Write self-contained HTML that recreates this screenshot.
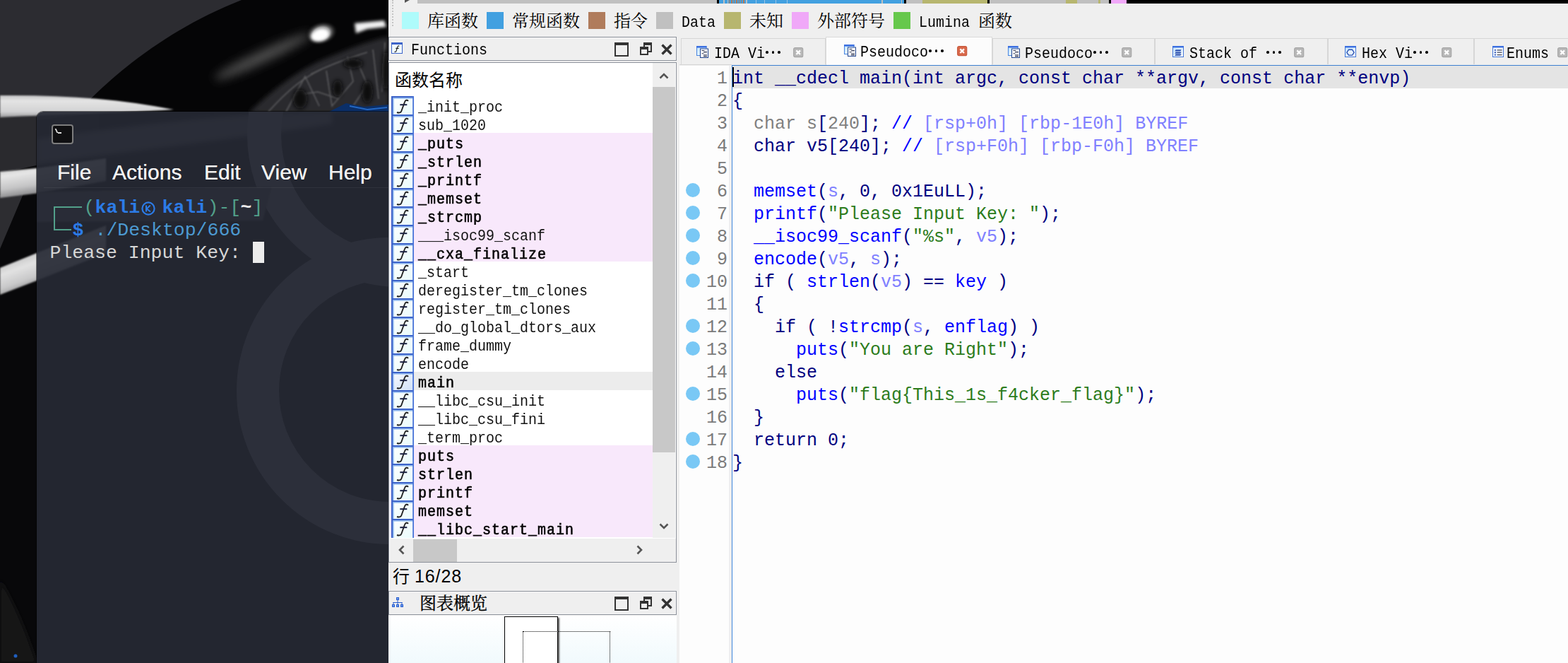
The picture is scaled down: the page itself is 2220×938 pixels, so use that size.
<!DOCTYPE html><html><head><meta charset="utf-8"><title>IDA</title><style>
html,body{margin:0;padding:0}
body{width:2220px;height:938px;overflow:hidden;position:relative;background:#efefef;font-family:"Liberation Sans",sans-serif}
#wall{position:absolute;left:0;top:0}
.cj{position:absolute;overflow:visible}
#term{position:absolute;left:52px;top:158px;width:498px;height:780px;background:rgba(38,41,52,.92);border-top-left-radius:9px;box-shadow:0 0 0 1px rgba(0,0,0,.5);overflow:hidden}
#ticon{position:absolute;left:21px;top:18px;width:27px;height:24px;border:2px solid #7d7d7d;border-radius:4px;background:#101012}
#ticon i{position:absolute;left:4px;top:4px;width:2px;height:6px;background:#ddd;transform:skewX(25deg)}
#ticon b{position:absolute;left:7px;top:9px;width:5px;height:2px;background:#ddd}
#menu span{position:absolute;top:69px;font-size:30px;line-height:34px;color:#f2f2f2;letter-spacing:0;text-shadow:0 0 .6px #fff}
#msep{position:absolute;left:10px;right:0;top:107px;height:1px;background:rgba(255,255,255,.06)}
.bx{position:absolute;background:#52a08a}
.tl{position:absolute;left:-1.5px;height:32px;width:498px;font-family:"Liberation Mono",monospace;font-size:26.5px;line-height:32px;white-space:pre}
.tl span{position:absolute;top:0}
#cur{position:absolute;left:306px;top:184px;width:16px;height:30px;background:#ececec}
#ida{position:absolute;left:550px;top:0;width:1670px;height:938px;background:#efefef;overflow:hidden}
.nv{position:absolute;top:0;height:5px}
.sq{position:absolute;top:17px;width:24px;height:24px}
.ss{position:absolute;font-family:"Liberation Mono",monospace;font-size:20px;line-height:30px;color:#000;white-space:pre;transform:scaleY(1.12);transform-origin:0 70%}
.st{position:absolute;font-size:25px;line-height:32px;color:#000;letter-spacing:.9px}
.ptitle{position:absolute;border:1px solid #8d929b;box-sizing:content-box;box-shadow:inset 0 0 0 1px #f6f6f6}
.ficon{position:absolute;box-sizing:border-box;background:#e9fbfb;border:solid #3c63c9}
.ficon em{position:absolute;font-family:"Liberation Serif",serif;font-style:italic;color:#222;line-height:1}
.bmax{position:absolute;width:16px;height:14px;border:2px solid #333;border-top-width:4px}
.brs1{position:absolute;width:8px;height:8px;border:2px solid #333;border-top-width:4px}
.brs2{position:absolute;width:8px;height:6px;border:2px solid #333;border-top-width:4px;background:#efefef}
#flist{position:absolute;left:0;top:88px;width:406px;height:706px;border:1px solid #8d929b;background:#fff;overflow:hidden}
.r{position:absolute;left:1px;width:372px;height:26px}
.pk{background:#f8e8fb}
.sel{background:#ececec}
.fi{position:absolute;left:2px;top:0;color:#e9fbfb}
.sel .fi{color:#cfe0f8}
.fn{position:absolute;left:40px;top:2px;font-family:"Liberation Mono",monospace;font-size:20px;line-height:30px;white-space:pre;color:#111;transform:scaleY(1.12);transform-origin:0 70%}
.bd{color:#000;-webkit-text-stroke:.55px #000;letter-spacing:1px}
.vsb{position:absolute;left:373px;top:0;width:32px;height:672px;background:#efefef}
.vth{position:absolute;left:0;top:34px;width:32px;height:517px;background:#c8c8c8}
.hsb{position:absolute;left:1px;top:673px;width:405px;height:33px;background:#efefef}
.hth{position:absolute;left:33px;top:1px;width:62px;height:32px;background:#c8c8c8}
#gov{position:absolute;left:0;top:871px;width:408px;height:67px;background:linear-gradient(#fff,#f1fafd)}
.gr1{position:absolute;left:164px;top:1px;width:74px;height:80px;border:1px solid #000;background:#fff;box-shadow:2px 2px 2px #555}
.gr2{position:absolute;left:190px;top:22px;width:122px;height:60px;border:1px dotted #000}
#tabs{position:absolute;left:0;top:0;width:1670px;height:93px}
.tab{position:absolute;top:54px;height:37px;border:1px solid #d6d6d6;border-bottom:none;background:#efefef;box-sizing:border-box}
.act{top:52px;height:40px;background:#fcfcfc;border-color:#dadada}
.tabline{position:absolute;left:486px;top:92px;width:1190px;height:1px;background:#3d7fd0}
.ti{position:absolute}
.dt{position:absolute;width:3.6px;height:3.6px;background:#000;border-radius:50%}
#code{position:absolute;left:412px;top:93px;width:1258px;height:845px;background:#fdfdfd}
#hl{position:absolute;left:75px;top:0;width:1183px;height:32px;background:#e4e4e4}
#vline{position:absolute;left:70px;top:0;width:4px;height:845px;background:#efefef;border-right:1px solid #3f86dc}
#caret{position:absolute;left:75px;top:2px;width:2px;height:28px;background:#000}
.dot{position:absolute;left:9px;width:20px;height:20px;border-radius:50%;background:#79c8f5}
.ln{position:absolute;left:30px;margin-top:3px;width:38px;text-align:right;font-family:"Liberation Mono",monospace;font-size:25px;line-height:32px;color:#7b7b7b}
.cl{position:absolute;left:75px;margin:3px 0 0 0;font-family:"Liberation Mono",monospace;font-size:25px;line-height:32px;white-space:pre;color:#000080}
.k{color:#000080}.g{color:#808080}.f{color:#0000ff}.v{color:#8080ff}.s{color:#2c7c1c}.c{color:#0000ff}.m{color:#8080ff}
</style></head><body><svg width="0" height="0" style="position:absolute"><defs><linearGradient id="dg" x1="0" y1="0" x2="1" y2="1"><stop offset="0" stop-color="#bfe4ff"/><stop offset="1" stop-color="#fff"/></linearGradient><linearGradient id="fbg" x1="0" y1="0" x2="1" y2="1"><stop offset="0" stop-color="#fff" stop-opacity=".9"/><stop offset="1" stop-color="#fff" stop-opacity="0"/></linearGradient><g id="fic"><rect width="32" height="27" fill="currentColor"/><rect width="32" height="27" fill="url(#fbg)"/><rect width="2.4" height="27" fill="#3c63c9"/><rect width="32" height="2.4" fill="#3c63c9"/><rect x="2.4" y="2.4" width="1.2" height="24.6" fill="#7fb0ee"/><rect x="2.4" y="2.4" width="29.6" height="1.2" fill="#7fb0ee"/><rect x="30.2" width="1.8" height="27" fill="#4a74d8"/><path d="M24,6.8C22.6,5.2 20,5.2 19,8.2L14.2,21.5C13.4,23.6 10.6,24 8,23" fill="none" stroke="#222" stroke-width="1.9"/><path d="M12.3,12.2H22.3" stroke="#1a2040" stroke-width="2"/></g></defs></svg><svg id="wall" width="550" height="938" viewBox="0 0 550 938">
<defs>
<linearGradient id="sv" x1="0" y1="0" x2="0" y2="1"><stop offset="0" stop-color="#c4c4c5"/><stop offset=".25" stop-color="#e4e4e4"/><stop offset=".75" stop-color="#d2d2d3"/><stop offset="1" stop-color="#9a9a9c"/></linearGradient><linearGradient id="sv2" gradientUnits="userSpaceOnUse" x1="0" y1="240" x2="6" y2="280"><stop offset="0" stop-color="#d0d0d0"/><stop offset=".25" stop-color="#e6e6e6"/><stop offset=".7" stop-color="#c4c4c5"/><stop offset="1" stop-color="#8e8e90"/></linearGradient><linearGradient id="sv3" gradientUnits="userSpaceOnUse" x1="0" y1="379" x2="14" y2="417"><stop offset="0" stop-color="#d0d0d0"/><stop offset=".25" stop-color="#e2e2e2"/><stop offset=".7" stop-color="#c8c8c9"/><stop offset="1" stop-color="#98989a"/></linearGradient>
<radialGradient id="hl"><stop offset="0" stop-color="#fff"/><stop offset=".5" stop-color="#bbb" stop-opacity=".8"/><stop offset="1" stop-color="#000" stop-opacity="0"/></radialGradient>
<filter id="b1"><feGaussianBlur stdDeviation="1.2"/></filter><filter id="b2" x="-30%" y="-50%" width="160%" height="200%"><feGaussianBlur stdDeviation="2.2"/></filter>
<filter id="b3" x="-30%" y="-30%" width="160%" height="160%"><feGaussianBlur stdDeviation="3"/></filter>
<filter id="b8" x="-50%" y="-400%" width="200%" height="900%"><feGaussianBlur stdDeviation="7"/></filter>
</defs>
<rect width="550" height="938" fill="#2c2c31"/>
<path d="M128,140 C165,104 235,42 342,0 L550,0 L550,160 L128,160 Z" fill="#050506"/>
<rect x="0" y="160" width="550" height="778" fill="#08080a"/>
<path d="M0,165 L140,160 L140,215 L0,245 Z" fill="#2a2a2e"/>
<path d="M52,170 L140,160 L140,215 L52,235 Z" fill="#111113"/>
<path d="M0,276 L34,272 L0,352 Z" fill="#2d2d31"/>
<ellipse cx="372" cy="80" rx="75" ry="9" fill="#4c4c4c" transform="rotate(-25 372 80)" filter="url(#b8)"/>
<ellipse cx="455" cy="47" rx="24" ry="17" fill="url(#hl)" transform="rotate(-15 455 47)"/>
<ellipse cx="453" cy="50" rx="13" ry="8" fill="#fff" transform="rotate(-15 453 50)" filter="url(#b2)"/>
<path d="M502,33 L544,29 L547,38 L520,41 L504,47 Z" fill="#f2f2f2" filter="url(#b2)"/>
<path d="M352,160 C395,118 435,92 468,80 C500,66 530,56 550,52 L550,160 Z" fill="#2c2c2e" filter="url(#b3)"/>
<g fill="none" stroke="#5c5c5e" stroke-width="1.6" filter="url(#b1)"><path d="M380,158 C410,125 430,110 455,98"/><path d="M405,158 L432,108 L452,150"/><path d="M440,105 C470,90 500,80 520,74"/><path d="M462,100 L470,150 L500,115 L492,80"/><path d="M505,85 L520,120 L500,150"/><path d="M528,70 L536,140 M545,60 L541,130"/><path d="M415,135 L450,130 L480,140"/></g>
<g fill="#0a0a0b" filter="url(#b3)"><ellipse cx="425" cy="140" rx="10" ry="14"/><ellipse cx="500" cy="90" rx="14" ry="7"/><ellipse cx="520" cy="130" rx="8" ry="16"/><ellipse cx="478" cy="125" rx="7" ry="12"/><ellipse cx="546" cy="100" rx="5" ry="30"/></g>
<path d="M462,160 L490,146 L515,151 L550,148 L550,160 Z" fill="#0b2f68"/>
<path d="M495,150 L520,155 L548,152" stroke="#2468c4" stroke-width="2" fill="none"/>
<path d="M0,135 C90,134 170,140 246,155 C170,160 80,162 0,166 Z" fill="url(#sv)" filter="url(#b1)"/>
<path d="M0,243 L52,238 L150,224 L150,256 L52,273.5 L0,280 Z" fill="url(#sv2)" filter="url(#b1)"/>
<path d="M0,379 L52,358 L150,319 L150,358 L52,397 L0,417 Z" fill="url(#sv3)" filter="url(#b1)"/>
<path d="M0,820 C20,850 40,900 52,938 L0,938 Z" fill="#141417" filter="url(#b3)"/><circle cx="22" cy="928" r="2.5" fill="#1f5fc0"/>
<!-- faint things seen through terminal -->
<clipPath id="tc"><rect x="52" y="158" width="498" height="780"/></clipPath>
<g clip-path="url(#tc)">
<path d="M52,196 C200,176 330,160 470,158 L470,175 C380,190 200,212 52,232 Z" fill="#5a5a62" filter="url(#b3)"/>
<circle cx="552" cy="553" r="187" fill="none" stroke="#77777f" stroke-width="60"/><circle cx="566" cy="190" r="192" fill="none" stroke="#77777f" stroke-width="48"/><path d="M52,272 L385,264 L372,312 L52,314 Z" fill="#505058" filter="url(#b1)"/>
</g>
</svg>
<div id="term">
<div id="ticon"><i></i><b></b></div>
<div id="menu"><span style="left:29px">File</span><span style="left:107px">Actions</span><span style="left:237px">Edit</span><span style="left:318px">View</span><span style="left:413px">Help</span></div>
<div id="msep"></div>
<div class="bx" style="left:24px;top:134px;width:40px;height:2px"></div>
<div class="bx" style="left:24px;top:134px;width:2px;height:34px"></div>
<div class="bx" style="left:24px;top:166px;width:25px;height:2px"></div>
<div class="tl" style="top:120px"><span style="left:68px;color:#52a08a">(</span><span style="left:84px;color:#2c7be6;font-weight:bold">kali</span><svg style="position:absolute;left:148px;top:6px" width="22" height="22" viewBox="0 0 22 22"><circle cx="11" cy="11" r="8.6" fill="none" stroke="#2c7be6" stroke-width="2.2"/><path d="M8,6.5V15.5M13.8,6.5L8.6,11.4L14,15.5" fill="none" stroke="#2c7be6" stroke-width="2"/></svg><span style="left:179px;color:#2c7be6;font-weight:bold">kali</span><span style="left:243px;color:#52a08a">)-[</span><span style="left:290px;color:#e8e8e8;font-weight:bold">~</span><span style="left:306px;color:#52a08a">]</span></div>
<div class="tl" style="top:152px"><span style="left:52px;color:#2c7be6;font-weight:bold">$</span><span style="left:84px;color:#4c9ad2">./Desktop/666</span></div>
<div class="tl" style="top:184px"><span style="left:20px;color:#d6d6d6">Please Input Key: </span></div>
<div id="cur"></div>
</div>
<div id="ida">
<div class="nv" style="left:482px;width:24px;background:repeating-linear-gradient(90deg,#b07c5c 0,#b07c5c 1.3px,#42a0e0 1.3px,#42a0e0 3.4px);z-index:1"></div>
<div class="nv" style="left:24px;width:17px;background:#efefef"></div>
<div class="nv" style="left:41px;width:424px;background:#c0c0c0"></div>
<div class="nv" style="left:465px;width:3px;background:#000"></div>
<div class="nv" style="left:468px;width:262px;background:#42a0e0"></div>
<div class="nv" style="left:474px;width:2px;background:#c0c0c0"></div>
<div class="nv" style="left:480px;width:1px;background:#c0c0c0"></div>
<div class="nv" style="left:506px;width:2px;background:#c0c0c0"></div>
<div class="nv" style="left:520px;width:1px;background:#9cc4e4"></div>
<div class="nv" style="left:532px;width:1px;background:#9cc4e4"></div>
<div class="nv" style="left:548px;width:1px;background:#9cc4e4"></div>
<div class="nv" style="left:564px;width:1px;background:#9cc4e4"></div>
<div class="nv" style="left:698px;width:2px;background:#c0c0c0"></div>
<div class="nv" style="left:726px;width:1px;background:#c0c0c0"></div>
<div class="nv" style="left:730px;width:3px;background:#000"></div>
<div class="nv" style="left:733px;width:23px;background:#c0c0c0"></div>
<div class="nv" style="left:756px;width:92px;background:#b7b66f"></div>
<div class="nv" style="left:848px;width:3px;background:#000"></div>
<div class="nv" style="left:851px;width:108px;background:#c0c0c0"></div>
<div class="nv" style="left:959px;width:16px;background:#b7b66f"></div>
<div class="nv" style="left:975px;width:30px;background:#c0c0c0"></div>
<div class="nv" style="left:1005px;width:3px;background:#b7b66f"></div>
<div class="nv" style="left:1008px;width:12px;background:#c0c0c0"></div>
<div class="nv" style="left:1020px;width:3px;background:#000"></div>
<div class="nv" style="left:1023px;width:22px;background:#f0a8f8"></div>
<div class="nv" style="left:1045px;width:625px;background:#000"></div>
<div style="position:absolute;left:23px;top:0;width:0;height:0;border-left:7px solid #555;border-top:4px solid transparent;border-bottom:4px solid transparent;margin-top:-4px"></div>
<div style="position:absolute;left:5px;top:0;width:2px;height:37px;border-left:2px dotted #c4c4c4"></div>
<div class="sq" style="left:19px;background:#aefbfb"></div>
<div class="sq" style="left:139px;background:#42a0e0"></div>
<div class="sq" style="left:283px;background:#b07c5c"></div>
<div class="sq" style="left:379px;background:#c0c0c0"></div>
<div class="sq" style="left:475px;background:#b7b66f"></div>
<div class="sq" style="left:571px;background:#f0a8f8"></div>
<div class="sq" style="left:715px;background:#66c84c"></div>
<svg class="cj" style="left:55px;top:17px" width="72" height="26.4" viewBox="0 0 72 26.4"><text x="0" y="21" font-size="24" fill="#000" font-family="&quot;Liberation Serif&quot;,&quot;Noto Serif CJK SC&quot;,serif">库函数</text></svg>
<svg class="cj" style="left:175px;top:17px" width="96" height="26.4" viewBox="0 0 96 26.4"><text x="0" y="21" font-size="24" fill="#000" font-family="&quot;Liberation Serif&quot;,&quot;Noto Serif CJK SC&quot;,serif">常规函数</text></svg>
<svg class="cj" style="left:319px;top:17px" width="48" height="26.4" viewBox="0 0 48 26.4"><text x="0" y="21" font-size="24" fill="#000" font-family="&quot;Liberation Serif&quot;,&quot;Noto Serif CJK SC&quot;,serif">指令</text></svg>
<span class="ss" style="left:415px;top:18px">Data</span>
<svg class="cj" style="left:511px;top:17px" width="48" height="26.4" viewBox="0 0 48 26.4"><text x="0" y="21" font-size="24" fill="#000" font-family="&quot;Liberation Serif&quot;,&quot;Noto Serif CJK SC&quot;,serif">未知</text></svg>
<svg class="cj" style="left:607px;top:17px" width="96" height="26.4" viewBox="0 0 96 26.4"><text x="0" y="21" font-size="24" fill="#000" font-family="&quot;Liberation Serif&quot;,&quot;Noto Serif CJK SC&quot;,serif">外部符号</text></svg>
<span class="ss" style="left:751px;top:18px">Lumina</span>
<svg class="cj" style="left:835px;top:17px" width="48" height="26.4" viewBox="0 0 48 26.4"><text x="0" y="21" font-size="24" fill="#000" font-family="&quot;Liberation Serif&quot;,&quot;Noto Serif CJK SC&quot;,serif">函数</text></svg>
<div class="ptitle" style="left:0;top:52px;width:406px;height:32px"></div>
<svg style="position:absolute;left:4px;top:60px" width="16" height="16" viewBox="0 0 16 16"><rect x=".5" y=".5" width="15" height="15" fill="#f2fcfd" stroke="#3c63c9"/><rect width="16" height="3" fill="#3c63c9"/><path d="M11.3,5.4C10.4,4.6 9.3,4.8 8.9,6.2L6.9,12.4C6.5,13.5 5.4,13.7 4.4,13.3M6.3,8.3H10.6" fill="none" stroke="#222" stroke-width="1.2"/></svg>
<span class="ss" style="left:32px;top:57px">Functions</span>
<div class="bmax" style="left:320px;top:60px"></div>
<div class="brs1" style="left:361px;top:60px"></div><div class="brs2" style="left:356px;top:66px"></div>
<svg style="position:absolute;left:386px;top:62px" width="16" height="16" viewBox="0 0 16 16"><path d="M1.5,1.5L14.5,14.5M14.5,1.5L1.5,14.5" stroke="#333" stroke-width="3.4"/></svg>
<div id="flist">
<svg class="cj" style="left:8px;top:12px" width="96" height="26.4" viewBox="0 0 96 26.4"><text x="0" y="21" font-size="24" fill="#000" font-family="&quot;Liberation Sans&quot;,&quot;Noto Sans CJK SC&quot;,sans-serif">函数名称</text></svg>
<div class="r" style="top:47px"><svg class="fi" width="32" height="27" viewBox="0 0 32 27"><use href="#fic"/></svg><span class="fn">_init_proc</span></div>
<div class="r" style="top:73px"><svg class="fi" width="32" height="27" viewBox="0 0 32 27"><use href="#fic"/></svg><span class="fn">sub_1020</span></div>
<div class="r pk" style="top:99px"><svg class="fi" width="32" height="27" viewBox="0 0 32 27"><use href="#fic"/></svg><span class="fn bd">_puts</span></div>
<div class="r pk" style="top:125px"><svg class="fi" width="32" height="27" viewBox="0 0 32 27"><use href="#fic"/></svg><span class="fn bd">_strlen</span></div>
<div class="r pk" style="top:151px"><svg class="fi" width="32" height="27" viewBox="0 0 32 27"><use href="#fic"/></svg><span class="fn bd">_printf</span></div>
<div class="r pk" style="top:177px"><svg class="fi" width="32" height="27" viewBox="0 0 32 27"><use href="#fic"/></svg><span class="fn bd">_memset</span></div>
<div class="r pk" style="top:203px"><svg class="fi" width="32" height="27" viewBox="0 0 32 27"><use href="#fic"/></svg><span class="fn bd">_strcmp</span></div>
<div class="r pk" style="top:229px"><svg class="fi" width="32" height="27" viewBox="0 0 32 27"><use href="#fic"/></svg><span class="fn">___isoc99_scanf</span></div>
<div class="r pk" style="top:255px"><svg class="fi" width="32" height="27" viewBox="0 0 32 27"><use href="#fic"/></svg><span class="fn bd">__cxa_finalize</span></div>
<div class="r" style="top:281px"><svg class="fi" width="32" height="27" viewBox="0 0 32 27"><use href="#fic"/></svg><span class="fn">_start</span></div>
<div class="r" style="top:307px"><svg class="fi" width="32" height="27" viewBox="0 0 32 27"><use href="#fic"/></svg><span class="fn">deregister_tm_clones</span></div>
<div class="r" style="top:333px"><svg class="fi" width="32" height="27" viewBox="0 0 32 27"><use href="#fic"/></svg><span class="fn">register_tm_clones</span></div>
<div class="r" style="top:359px"><svg class="fi" width="32" height="27" viewBox="0 0 32 27"><use href="#fic"/></svg><span class="fn">__do_global_dtors_aux</span></div>
<div class="r" style="top:385px"><svg class="fi" width="32" height="27" viewBox="0 0 32 27"><use href="#fic"/></svg><span class="fn">frame_dummy</span></div>
<div class="r" style="top:411px"><svg class="fi" width="32" height="27" viewBox="0 0 32 27"><use href="#fic"/></svg><span class="fn">encode</span></div>
<div class="r sel" style="top:437px"><svg class="fi" width="32" height="27" viewBox="0 0 32 27"><use href="#fic"/></svg><span class="fn bd">main</span></div>
<div class="r" style="top:463px"><svg class="fi" width="32" height="27" viewBox="0 0 32 27"><use href="#fic"/></svg><span class="fn">__libc_csu_init</span></div>
<div class="r" style="top:489px"><svg class="fi" width="32" height="27" viewBox="0 0 32 27"><use href="#fic"/></svg><span class="fn">__libc_csu_fini</span></div>
<div class="r" style="top:515px"><svg class="fi" width="32" height="27" viewBox="0 0 32 27"><use href="#fic"/></svg><span class="fn">_term_proc</span></div>
<div class="r pk" style="top:541px"><svg class="fi" width="32" height="27" viewBox="0 0 32 27"><use href="#fic"/></svg><span class="fn bd">puts</span></div>
<div class="r pk" style="top:567px"><svg class="fi" width="32" height="27" viewBox="0 0 32 27"><use href="#fic"/></svg><span class="fn bd">strlen</span></div>
<div class="r pk" style="top:593px"><svg class="fi" width="32" height="27" viewBox="0 0 32 27"><use href="#fic"/></svg><span class="fn bd">printf</span></div>
<div class="r pk" style="top:619px"><svg class="fi" width="32" height="27" viewBox="0 0 32 27"><use href="#fic"/></svg><span class="fn bd">memset</span></div>
<div class="r pk" style="top:645px"><svg class="fi" width="32" height="27" viewBox="0 0 32 27"><use href="#fic"/></svg><span class="fn bd">__libc_start_main</span></div>
<div class="vsb"><svg width="32" height="32" style="position:absolute;left:0;top:2px"><path d="M10.5,19.5L16,14L21.5,19.5" fill="none" stroke="#555" stroke-width="2.6"/></svg><div class="vth"></div><svg width="32" height="32" style="position:absolute;left:0;top:640px"><path d="M10.5,12.5L16,18L21.5,12.5" fill="none" stroke="#555" stroke-width="2.6"/></svg></div>
<div class="hsb"><svg width="32" height="32" style="position:absolute;left:0;top:0"><path d="M19.5,10.5L14,16L19.5,21.5" fill="none" stroke="#555" stroke-width="2.6"/></svg><div class="hth"></div><svg width="32" height="32" style="position:absolute;left:338px;top:0"><path d="M12.5,10.5L18,16L12.5,21.5" fill="none" stroke="#555" stroke-width="2.6"/></svg></div>
</div>
<svg class="cj" style="left:6px;top:803px" width="24" height="26.4" viewBox="0 0 24 26.4"><text x="0" y="21" font-size="24" fill="#000" font-family="&quot;Liberation Sans&quot;,&quot;Noto Sans CJK SC&quot;,sans-serif">行</text></svg>
<span class="st" style="left:37px;top:799px">16/28</span>
<div class="ptitle" style="left:0;top:836px;width:406px;height:32px"></div>
<svg style="position:absolute;left:5px;top:845px" width="16" height="15" viewBox="0 0 16 15"><g fill="#2a5fd0"><rect x="6" y="0" width="4" height="4"/><rect x="0" y="10" width="4" height="4"/><rect x="6" y="10" width="4" height="4"/><rect x="12" y="10" width="4" height="4"/><rect x="7.5" y="4" width="1" height="6"/><rect x="1.5" y="7" width="13" height="1"/><rect x="1.5" y="7" width="1" height="3"/><rect x="13.5" y="7" width="1" height="3"/></g><g fill="#6d9bea"><rect x="7" y="1" width="2" height="2"/><rect x="1" y="11" width="2" height="2"/><rect x="7" y="11" width="2" height="2"/><rect x="13" y="11" width="2" height="2"/></g></svg>
<svg class="cj" style="left:44px;top:841px" width="96" height="26.4" viewBox="0 0 96 26.4"><text x="0" y="21" font-size="24" fill="#000" stroke="#000" stroke-width="0.3" font-family="&quot;Liberation Serif&quot;,&quot;Noto Serif CJK SC&quot;,serif">图表概览</text></svg>
<div class="bmax" style="left:320px;top:844px"></div>
<div class="brs1" style="left:361px;top:844px"></div><div class="brs2" style="left:356px;top:850px"></div>
<svg style="position:absolute;left:386px;top:846px" width="16" height="16" viewBox="0 0 16 16"><path d="M1.5,1.5L14.5,14.5M14.5,1.5L1.5,14.5" stroke="#333" stroke-width="3.4"/></svg>
<div id="gov"><div class="gr1"></div><div class="gr2"></div></div>
<div id="tabs">
<div class="tab" style="left:414px;width:205px"></div>
<div class="tab" style="left:855px;width:230px"></div>
<div class="tab" style="left:1085px;width:245px"></div>
<div class="tab" style="left:1330px;width:207px"></div>
<div class="tab" style="left:1537px;width:143px"></div>
<div class="tabline"></div><div style="position:absolute;left:412px;top:91px;width:74px;height:1px;background:#d4d4d4"></div>
<div class="tab act" style="left:619px;width:236px"></div>
<svg class="ti" style="left:436px;top:65px" width="17" height="17" viewBox="0 0 17 17"><rect x=".5" y=".5" width="13.5" height="13" fill="url(#dg)" stroke="#4a86e0"/><rect x="0" y="0" width="14.5" height="2.6" fill="#3b6fe0"/><rect x="5.5" y="4" width="11" height="12.5" fill="#fdfdfd" stroke="#23468f"/><path d="M7.5,6.5h4M10,8.6h5M7.5,10.7h3M10,12.8h5M10,14.6h5" stroke="#333a55" stroke-width="1.1"/></svg>
<span class="ss" style="left:461px;top:62px">IDA Vi</span>
<i class="dt" style="left:534.2px;top:72px"></i><i class="dt" style="left:542.6px;top:72px"></i><i class="dt" style="left:551.1px;top:72px"></i>
<svg class="ti" style="left:573px;top:67px" width="15" height="15" viewBox="0 0 15 15"><rect x=".7" y=".7" width="13" height="13" rx="2" fill="#b8b8b8" stroke="#a6a6a6" stroke-width="1.2"/><path d="M4.4,4.4L10,10M10,4.4L4.4,10" stroke="#fff" stroke-width="2.3"/></svg>
<svg class="ti" style="left:645px;top:63px" width="17" height="17" viewBox="0 0 17 17"><rect x=".5" y=".5" width="13.5" height="13" fill="url(#dg)" stroke="#4a86e0"/><rect x="0" y="0" width="14.5" height="2.6" fill="#3b6fe0"/><rect x="5.5" y="4" width="11" height="12.5" fill="#fdfdfd" stroke="#23468f"/><path d="M7.5,6.5h4M10,8.6h5M7.5,10.7h3M10,12.8h5M10,14.6h5" stroke="#333a55" stroke-width="1.1"/></svg>
<span class="ss" style="left:668px;top:60px">Pseudoco</span>
<i class="dt" style="left:765.2px;top:70px"></i><i class="dt" style="left:773.6px;top:70px"></i><i class="dt" style="left:782.1px;top:70px"></i>
<svg class="ti" style="left:805px;top:65px" width="15" height="15" viewBox="0 0 15 15"><rect x=".7" y=".7" width="13" height="13" rx="2" fill="#d9694b" stroke="#c7573a" stroke-width="1.2"/><path d="M4.4,4.4L10,10M10,4.4L4.4,10" stroke="#fff" stroke-width="2.3"/></svg>
<svg class="ti" style="left:877px;top:65px" width="17" height="17" viewBox="0 0 17 17"><rect x=".5" y=".5" width="13.5" height="13" fill="url(#dg)" stroke="#4a86e0"/><rect x="0" y="0" width="14.5" height="2.6" fill="#3b6fe0"/><rect x="5.5" y="4" width="11" height="12.5" fill="#fdfdfd" stroke="#23468f"/><path d="M7.5,6.5h4M10,8.6h5M7.5,10.7h3M10,12.8h5M10,14.6h5" stroke="#333a55" stroke-width="1.1"/></svg>
<span class="ss" style="left:901px;top:62px">Pseudoco</span>
<i class="dt" style="left:998.2px;top:72px"></i><i class="dt" style="left:1006.6px;top:72px"></i><i class="dt" style="left:1015.1px;top:72px"></i>
<svg class="ti" style="left:1038px;top:67px" width="15" height="15" viewBox="0 0 15 15"><rect x=".7" y=".7" width="13" height="13" rx="2" fill="#b8b8b8" stroke="#a6a6a6" stroke-width="1.2"/><path d="M4.4,4.4L10,10M10,4.4L4.4,10" stroke="#fff" stroke-width="2.3"/></svg>
<svg class="ti" style="left:1110px;top:65px" width="16" height="16" viewBox="0 0 17 17"><rect x=".5" y=".5" width="16" height="16" fill="url(#dg)" stroke="#3b6fd4"/><rect width="17" height="2.6" fill="#3b6fe0"/><path d="M5,5.6h8.5l-1.6,2.4h-8.5zM5,8.9h8.5l-1.6,2.4h-8.5zM5,12.2h8.5l-1.6,2.4h-8.5z" fill="#2a4fb0"/></svg>
<span class="ss" style="left:1134px;top:62px">Stack of </span>
<i class="dt" style="left:1243.2px;top:72px"></i><i class="dt" style="left:1251.6px;top:72px"></i><i class="dt" style="left:1260.1px;top:72px"></i>
<svg class="ti" style="left:1282px;top:67px" width="15" height="15" viewBox="0 0 15 15"><rect x=".7" y=".7" width="13" height="13" rx="2" fill="#b8b8b8" stroke="#a6a6a6" stroke-width="1.2"/><path d="M4.4,4.4L10,10M10,4.4L4.4,10" stroke="#fff" stroke-width="2.3"/></svg>
<svg class="ti" style="left:1354px;top:65px" width="16" height="16" viewBox="0 0 17 17"><rect x=".5" y=".5" width="16" height="16" fill="url(#dg)" stroke="#3b6fd4"/><rect width="17" height="2.6" fill="#3b6fe0"/><path d="M5.8,5.6h5.4l2.8,4.2l-2.8,4.2h-5.4l-2.8,-4.2z" fill="#e6f1fe" stroke="#2a4fb0" stroke-width="1.4"/></svg>
<span class="ss" style="left:1378px;top:62px">Hex Vi</span>
<i class="dt" style="left:1451.2px;top:72px"></i><i class="dt" style="left:1459.6px;top:72px"></i><i class="dt" style="left:1468.1px;top:72px"></i>
<svg class="ti" style="left:1491px;top:67px" width="15" height="15" viewBox="0 0 15 15"><rect x=".7" y=".7" width="13" height="13" rx="2" fill="#b8b8b8" stroke="#a6a6a6" stroke-width="1.2"/><path d="M4.4,4.4L10,10M10,4.4L4.4,10" stroke="#fff" stroke-width="2.3"/></svg>
<svg class="ti" style="left:1563px;top:65px" width="16" height="16" viewBox="0 0 17 17"><rect x=".5" y=".5" width="16" height="16" fill="#f4f9ff" stroke="#3b6fd4"/><rect width="17" height="2.6" fill="#3b6fe0"/><path d="M3,6.2h2.2M3,9.8h2.2M3,13.4h2.2" stroke="#2a4fb0" stroke-width="2"/><path d="M7,6.2h7.5M7,9.8h7.5M7,13.4h7.5" stroke="#445" stroke-width="1.3"/></svg>
<span class="ss" style="left:1583px;top:62px">Enums</span>
<svg class="ti" style="left:1655px;top:67px" width="15" height="15" viewBox="0 0 15 15"><rect x=".7" y=".7" width="13" height="13" rx="2" fill="#b8b8b8" stroke="#a6a6a6" stroke-width="1.2"/><path d="M4.4,4.4L10,10M10,4.4L4.4,10" stroke="#fff" stroke-width="2.3"/></svg>
</div>
<div id="code">
<div id="hl"></div><div id="vline"></div><div id="caret"></div>
<span class="ln" style="top:0px">1</span>
<pre class="cl" style="top:0px"><span class="k">int __cdecl main(int argc, const char **argv, const char **envp)</span></pre>
<span class="ln" style="top:32px">2</span>
<pre class="cl" style="top:32px"><span class="k">{</span></pre>
<span class="ln" style="top:64px">3</span>
<pre class="cl" style="top:64px"><span class="g">  char s</span><span class="k">[</span><span class="g">240</span><span class="k">];</span><span class="c"> // </span><span class="m">[rsp+0h] [rbp-1E0h] BYREF</span></pre>
<span class="ln" style="top:96px">4</span>
<pre class="cl" style="top:96px"><span class="k">  char v5[240];</span><span class="c"> // </span><span class="m">[rsp+F0h] [rbp-F0h] BYREF</span></pre>
<span class="ln" style="top:128px">5</span>
<pre class="cl" style="top:128px"></pre>
<i class="dot" style="top:166px"></i>
<span class="ln" style="top:160px">6</span>
<pre class="cl" style="top:160px"><span class="f">  memset</span><span class="k">(</span><span class="v">s</span><span class="k">, 0, 0x1EuLL);</span></pre>
<i class="dot" style="top:198px"></i>
<span class="ln" style="top:192px">7</span>
<pre class="cl" style="top:192px"><span class="f">  printf</span><span class="k">(</span><span class="s">"Please Input Key: "</span><span class="k">);</span></pre>
<i class="dot" style="top:230px"></i>
<span class="ln" style="top:224px">8</span>
<pre class="cl" style="top:224px"><span class="f">  __isoc99_scanf</span><span class="k">(</span><span class="s">"%s"</span><span class="k">, </span><span class="v">v5</span><span class="k">);</span></pre>
<i class="dot" style="top:262px"></i>
<span class="ln" style="top:256px">9</span>
<pre class="cl" style="top:256px"><span class="f">  encode</span><span class="k">(</span><span class="v">v5</span><span class="k">, </span><span class="v">s</span><span class="k">);</span></pre>
<i class="dot" style="top:294px"></i>
<span class="ln" style="top:288px">10</span>
<pre class="cl" style="top:288px"><span class="k">  if ( </span><span class="f">strlen</span><span class="k">(</span><span class="v">v5</span><span class="k">) == </span><span class="f">key</span><span class="k"> )</span></pre>
<span class="ln" style="top:320px">11</span>
<pre class="cl" style="top:320px"><span class="k">  {</span></pre>
<i class="dot" style="top:358px"></i>
<span class="ln" style="top:352px">12</span>
<pre class="cl" style="top:352px"><span class="k">    if ( !</span><span class="f">strcmp</span><span class="k">(</span><span class="v">s</span><span class="k">, </span><span class="f">enflag</span><span class="k">) )</span></pre>
<i class="dot" style="top:390px"></i>
<span class="ln" style="top:384px">13</span>
<pre class="cl" style="top:384px"><span class="f">      puts</span><span class="k">(</span><span class="s">"You are Right"</span><span class="k">);</span></pre>
<span class="ln" style="top:416px">14</span>
<pre class="cl" style="top:416px"><span class="k">    else</span></pre>
<i class="dot" style="top:454px"></i>
<span class="ln" style="top:448px">15</span>
<pre class="cl" style="top:448px"><span class="f">      puts</span><span class="k">(</span><span class="s">"flag{This_1s_f4cker_flag}"</span><span class="k">);</span></pre>
<span class="ln" style="top:480px">16</span>
<pre class="cl" style="top:480px"><span class="k">  }</span></pre>
<i class="dot" style="top:518px"></i>
<span class="ln" style="top:512px">17</span>
<pre class="cl" style="top:512px"><span class="k">  return 0;</span></pre>
<i class="dot" style="top:550px"></i>
<span class="ln" style="top:544px">18</span>
<pre class="cl" style="top:544px"><span class="k">}</span></pre>
</div>
</div></body></html>
